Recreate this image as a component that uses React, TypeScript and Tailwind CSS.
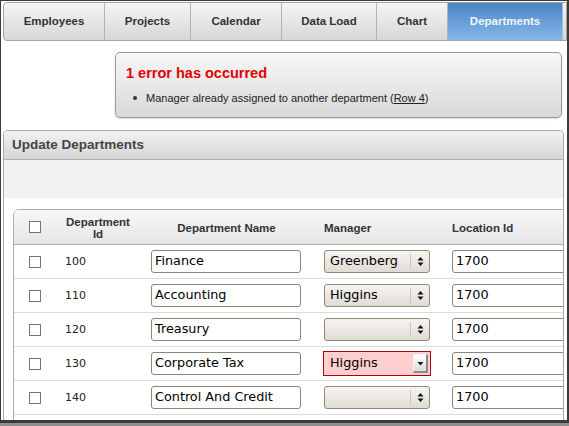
import React from "react";

const tabs = [
  { label: "Employees", w: "w-[101px]" },
  { label: "Projects", w: "w-[86px]" },
  { label: "Calendar", w: "w-[91px]" },
  { label: "Data Load", w: "w-[95px]" },
  { label: "Chart", w: "w-[71px]" },
];

const rows = [
  { id: "100", name: "Finance", manager: "Greenberg", loc: "1700", error: false },
  { id: "110", name: "Accounting", manager: "Higgins", loc: "1700", error: false },
  { id: "120", name: "Treasury", manager: "", loc: "1700", error: false },
  { id: "130", name: "Corporate Tax", manager: "Higgins", loc: "1700", error: true },
  { id: "140", name: "Control And Credit", manager: "", loc: "1700", error: false },
];

function Checkbox() {
  return <div className="w-[12px] h-[12px] border border-[#767676] bg-white" />;
}

function UpDown() {
  return (
    <svg width="7" height="11" viewBox="0 0 7 11">
      <path d="M0.5 4.5 L3.5 1 L6.5 4.5Z M0.5 6.5 L3.5 10 L6.5 6.5Z" fill="#111" />
    </svg>
  );
}

function Select({ value }: { value: string }) {
  return (
    <div className="w-[106px] h-[23px] border border-[#918878] rounded-[3px] bg-gradient-to-b from-[#f6f4f0] to-[#dfdcd4] flex items-center">
      <span className="flex-1 pl-[5px] text-[12.8px] text-black leading-none">{value}</span>
      <div className="w-px h-[15px] bg-[#cbc6bb]" />
      <div className="w-[18px] flex justify-center items-center">
        <UpDown />
      </div>
    </div>
  );
}

function ErrorSelect({ value }: { value: string }) {
  return (
    <div className="ml-[-1px] w-[108px] h-[25px] border border-[#b30000] bg-[#ffcfcf] flex items-center">
      <span className="flex-1 pl-[6px] text-[12.8px] text-black leading-none">{value}</span>
      <div className="mr-[2px] w-[15px] h-[19px] bg-gradient-to-b from-[#ffffff] to-[#dcdcdc] border-r-2 border-b-2 border-[#8a8a8a] border-t border-l border-t-[#f4f4f4] border-l-[#f4f4f4] flex items-center justify-center">
        <svg width="7" height="5" viewBox="0 0 7 5">
          <path d="M0.5 1 L3.5 4.5 L6.5 1Z" fill="#111" />
        </svg>
      </div>
    </div>
  );
}

function TextInput({ value, w }: { value: string; w: string }) {
  return (
    <div
      className={`${w} h-[23px] border border-[#8e8574] rounded-[3px] bg-white flex items-center pl-[3px] text-[12.8px] text-black leading-none`}
    >
      {value}
    </div>
  );
}

export default function App() {
  return (
    <div
      className="w-[569px] h-[426px] bg-[#3b3b3b] overflow-hidden flex flex-col pt-[1px] pl-[1px]"
      style={{ fontFamily: '"Liberation Sans", Arial, sans-serif' }}
    >
      <div className="w-[566px] h-[419px] bg-white overflow-hidden flex flex-col shrink-0">
        {/* Tabs */}
        <div className="ml-[2px] mt-[1px] h-[39px] shrink-0 flex border border-[#a3a3a3] rounded-l-[4px] overflow-hidden bg-gradient-to-b from-[#f5f5f5] to-[#d7d7d7]">
          {tabs.map((t) => (
            <div
              key={t.label}
              className={`${t.w} shrink-0 h-full flex items-center justify-center border-r border-[#b3b3b3] text-[11.5px] font-bold text-[#333]`}
            >
              {t.label}
            </div>
          ))}
          <div className="w-[115px] shrink-0 h-full flex items-center justify-center border-r border-[#9fbfe0] bg-gradient-to-b from-[#4c84c4] to-[#86b7e8] text-[11.5px] font-bold text-[#f2f7fd]">
            Departments
          </div>
          <div className="w-[60px] shrink-0 h-full" />
        </div>

        {/* Error box */}
        <div className="ml-[114px] mt-[11px] w-[447px] h-[66px] shrink-0 border border-[#9a9a9a] rounded-[5px] bg-gradient-to-b from-[#f7f7f7] to-[#d9d9d9] shadow-[0_1px_2px_rgba(0,0,0,0.15)] pl-[10px] pt-[11px]">
          <div className="text-[#e00000] font-bold text-[14.5px] leading-[18px]">1 error has occurred</div>
          <div className="mt-[8px] h-[16px] flex items-center text-[11px] text-[#222]">
            <span className="ml-[7px] w-[4px] h-[4px] rounded-full bg-[#333]" />
            <span className="ml-[9px]">
              Manager already assigned to another department (<span className="underline">Row 4</span>)
            </span>
          </div>
        </div>

        {/* Panel */}
        <div className="ml-[2px] mt-[12px] w-[561px] flex-1 border border-b-0 border-[#a9a9a9] rounded-t-[5px] overflow-hidden flex flex-col">
          <div className="h-[29px] shrink-0 border-b border-[#b3b3b3] bg-gradient-to-b from-[#f3f3f3] to-[#d5d5d5] flex items-center pl-[8px] text-[13.5px] font-bold text-[#454545]">
            Update Departments
          </div>
          <div className="h-[38px] shrink-0 bg-[#f2f2f2]" />
          <div className="flex-1 bg-white pt-[11px] pl-[9px]">
            <div className="w-[620px] border border-[#adadad] rounded-tl-[6px] overflow-hidden pb-[20px]">
              {/* header */}
              <div className="h-[35px] flex items-center border-b border-[#b0b0b0] bg-gradient-to-b from-[#f8f8f8] to-[#e5e5e5] text-[11.5px] font-bold text-[#333]">
                <div className="w-[41px] flex justify-center">
                  <Checkbox />
                </div>
                <div className="w-[86px] text-center leading-[12px] pt-[2px]">
                  Department
                  <br />
                  Id
                </div>
                <div className="w-[171px] text-center pt-[3px]">Department Name</div>
                <div className="w-[133px] pl-[12px] pt-[3px]">Manager</div>
                <div className="pl-[7px] pt-[3px]">Location Id</div>
              </div>
              {rows.map((r) => (
                <div key={r.id} className="h-[34px] flex items-center border-b border-[#dcdcdc]">
                  <div className="w-[41px] flex justify-center">
                    <Checkbox />
                  </div>
                  <div
                    className="w-[86px] pl-[10px] text-[11px] text-[#222] pt-[2px]"
                    style={{ fontFamily: '"DejaVu Sans", sans-serif' }}
                  >
                    {r.id}
                  </div>
                  <div className="w-[171px] pl-[10px]" style={{ fontFamily: '"DejaVu Sans", sans-serif' }}>
                    <TextInput value={r.name} w="w-[150px]" />
                  </div>
                  <div className="w-[133px] pl-[12px]" style={{ fontFamily: '"DejaVu Sans", sans-serif' }}>
                    {r.error ? <ErrorSelect value={r.manager} /> : <Select value={r.manager} />}
                  </div>
                  <div className="pl-[7px]" style={{ fontFamily: '"DejaVu Sans", sans-serif' }}>
                    <TextInput value={r.loc} w="w-[140px]" />
                  </div>
                </div>
              ))}
            </div>
          </div>
        </div>
      </div>
      <div className="h-[3px] shrink-0" />
      <div className="flex-1 bg-[#8e8e8e] ml-[-1px]" />
    </div>
  );
}
